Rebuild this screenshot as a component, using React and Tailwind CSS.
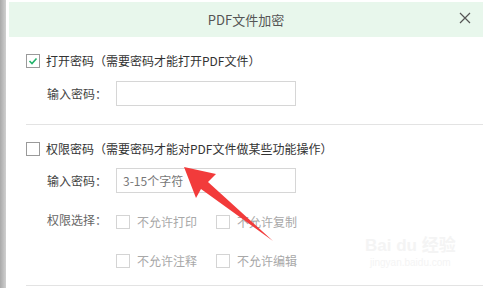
import React from 'react';

const font = { fontFamily: '"Microsoft YaHei", "Noto Sans CJK SC", "Noto Sans", sans-serif' };

const Box = ({ checked, disabled }) => (
  <span
    className={`flex h-[14px] w-[14px] shrink-0 items-center justify-center border bg-white ${
      disabled ? 'border-[#d4d4d4]' : 'border-[#9a9a9a]'
    }`}
  >
    {checked && (
      <svg width="10" height="8" viewBox="0 0 10 8" fill="none">
        <path d="M1.5 4l2.5 2.5L8.5 1.5" stroke="#22b36b" strokeWidth="1.6" />
      </svg>
    )}
  </span>
);

const Perm = ({ label }) => (
  <div className="flex w-[100px] items-center gap-[7px]">
    <Box disabled />
    <span className="whitespace-nowrap text-[12px] text-[#a8a8a8]">{label}</span>
  </div>
);

const Label = ({ children, muted }) => (
  <span className={`w-[90px] shrink-0 whitespace-nowrap pl-[21px] text-[12px] leading-[14px] ${muted ? 'text-[#666]' : 'text-[#444]'}`}>
    {children}
  </span>
);

export default function App() {
  return (
    <div className="relative flex h-[288px] w-[483px] overflow-hidden bg-white" style={font}>
      {/* left edge of the window behind */}
      <div className="w-[6px] bg-gradient-to-r from-[#a9a9a9] to-[#d0d0d0]" />

      <div className="flex flex-1 flex-col pt-[2px]">
        {/* header */}
        <div className="relative ml-[3px] flex h-[35px] items-center justify-center bg-[#e8f7ec]">
          <span className="text-[13px] text-[#555]">PDF文件加密</span>
          <svg className="absolute right-[12px] top-[10px]" width="12" height="12" viewBox="0 0 12 12">
            <path d="M1 1l10 10M11 1L1 11" stroke="#555" strokeWidth="1.2" />
          </svg>
        </div>

        {/* open password */}
        <div className="ml-[20px] flex flex-col">
          <div className="mt-[16px] flex h-[16px] items-center gap-[6px]">
            <Box checked />
            <span className="whitespace-nowrap text-[12px] text-[#333]">打开密码（需要密码才能打开PDF文件）</span>
          </div>
          <div className="mt-[12px] flex items-center">
            <Label>输入密码：</Label>
            <div className="h-[25px] w-[180px] border border-[#d6d6d6]" />
          </div>
        </div>

        <div className="ml-[20px] mt-[18px] h-px bg-[#e3e3e3]" />

        {/* permission password */}
        <div className="ml-[20px] flex flex-col">
          <div className="mt-[16px] flex h-[16px] items-center gap-[6px]">
            <Box />
            <span className="whitespace-nowrap text-[12px] text-[#333]">权限密码（需要密码才能对PDF文件做某些功能操作）</span>
          </div>
          <div className="mt-[11px] flex items-center">
            <Label>输入密码：</Label>
            <div className="flex h-[25px] w-[180px] items-center border border-[#d6d6d6] pl-[6px] text-[12px] text-[#777]">
              3-15个字符
            </div>
          </div>
          <div className="mt-[20px] flex items-start">
            <Label muted>权限选择：</Label>
            <div className="flex flex-col gap-[21px]">
              <div className="flex"><Perm label="不允许打印" /><Perm label="不允许复制" /></div>
              <div className="flex"><Perm label="不允许注释" /><Perm label="不允许编辑" /></div>
            </div>
          </div>
        </div>

        <div className="ml-[20px] mt-auto mb-[2px] h-px bg-[#e3e3e3]" />
      </div>

      {/* red arrow annotation */}
      <svg className="absolute left-0 top-0" width="483" height="288" viewBox="0 0 483 288">
        <polygon points="184,167 216,174 208,182 273,241 201,189 196,198" fill="#f23b3b" />
      </svg>

      {/* watermark */}
      <div className="absolute left-[365px] top-[236px] flex flex-col items-center text-[#f4f4f4]">
        <span className="text-[17px] font-bold leading-[20px]" style={{ fontFamily: '"Liberation Sans", "Noto Sans CJK SC", sans-serif' }}>Bai du 经验</span>
        <span className="text-[10px] leading-[14px]" style={{ fontFamily: '"Liberation Sans", sans-serif' }}>jingyan.baidu.com</span>
      </div>
    </div>
  );
}
